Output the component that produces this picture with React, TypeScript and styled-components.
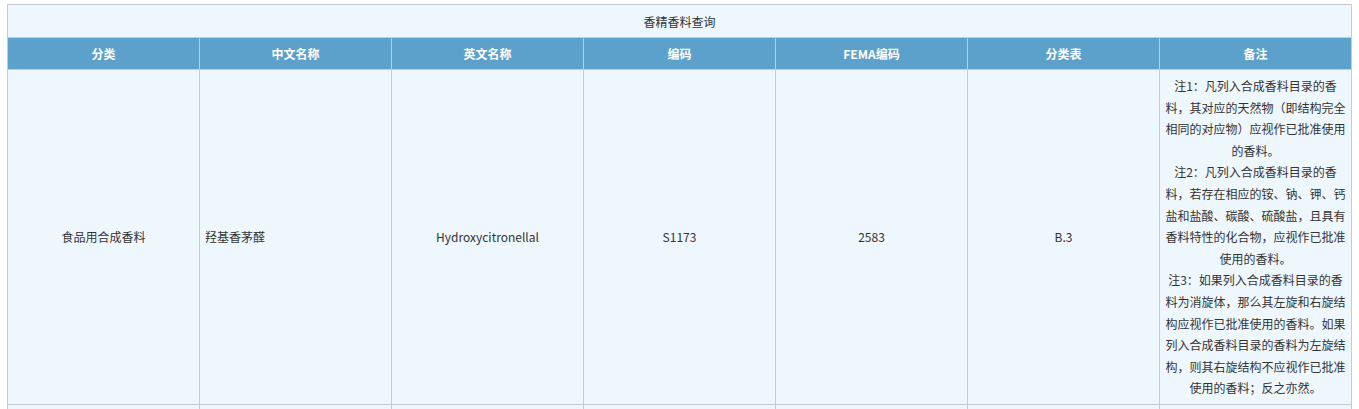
import React from 'react'
import styled, { createGlobalStyle } from 'styled-components'

const GlobalStyle = createGlobalStyle`
  body {
    margin: 0;
    background: #ffffff;
    font-family: "Microsoft YaHei", "Noto Sans CJK SC", "Noto Sans", sans-serif;
  }
`

const columns = ['分类', '中文名称', '英文名称', '编码', 'FEMA编码', '分类表', '备注']

const notes = [
  '注1：凡列入合成香料目录的香料，其对应的天然物（即结构完全相同的对应物）应视作已批准使用的香料。',
  '注2：凡列入合成香料目录的香料，若存在相应的铵、钠、钾、钙盐和盐酸、碳酸、硫酸盐，且具有香料特性的化合物，应视作已批准使用的香料。',
  '注3：如果列入合成香料目录的香料为消旋体，那么其左旋和右旋结构应视作已批准使用的香料。如果列入合成香料目录的香料为左旋结构，则其右旋结构不应视作已批准使用的香料；反之亦然。',
]

const rows = [
  {
    category: '食品用合成香料',
    cnName: '羟基香茅醛',
    enName: 'Hydroxycitronellal',
    code: 'S1173',
    fema: '2583',
    table: 'B.3',
  },
]

const App = () => (
  <Page>
    <GlobalStyle />
    <Table>
      <colgroup>
        {columns.map(c => (
          <col key={c} style={{ width: `${100 / columns.length}%` }} />
        ))}
      </colgroup>
      <tbody>
        <tr>
          <Caption colSpan={columns.length}>香精香料查询</Caption>
        </tr>
        <tr>
          {columns.map(c => (
            <Head key={c}>{c}</Head>
          ))}
        </tr>
        {rows.map(r => (
          <tr key={r.code}>
            <Cell>{r.category}</Cell>
            <Cell align="left">{r.cnName}</Cell>
            <Cell>{r.enName}</Cell>
            <Cell>{r.code}</Cell>
            <Cell>{r.fema}</Cell>
            <Cell>{r.table}</Cell>
            <NoteCell>
              {notes.map(n => (
                <Note key={n}>{n}</Note>
              ))}
            </NoteCell>
          </tr>
        ))}
        <tr>
          {columns.map(c => (
            <EmptyCell key={c} />
          ))}
        </tr>
      </tbody>
    </Table>
  </Page>
)

export default App

const Page = styled.div`
  padding: 4px 7px 0 7px;
  height: 409px;
  overflow: hidden;
  box-sizing: border-box;
`

const Table = styled.table`
  width: 100%;
  table-layout: fixed;
  border-collapse: collapse;
  background: #eff7fe;
  font-size: 12px;
  color: #333333;
`

const Caption = styled.td`
  height: 32px;
  padding: 0;
  text-align: center;
  border: 1px solid #c1ccd5;
`

const Head = styled.td`
  height: 31px;
  padding: 0 5px;
  text-align: center;
  font-weight: bold;
  color: #ffffff;
  background: #5ca1cb;
  border: 1px solid #c1ccd5;
`

const Cell = styled.td<{ align?: string }>`
  padding: 0 5px;
  text-align: ${p => p.align || 'center'};
  vertical-align: middle;
  border: 1px solid #c1ccd5;
`

const NoteCell = styled.td`
  padding: 5px 5px 5px 5px;
  text-align: center;
  border: 1px solid #c1ccd5;
`

const Note = styled.div`
  line-height: 1.8;
`

const EmptyCell = styled.td`
  height: 20px;
  border: 1px solid #c1ccd5;
`
